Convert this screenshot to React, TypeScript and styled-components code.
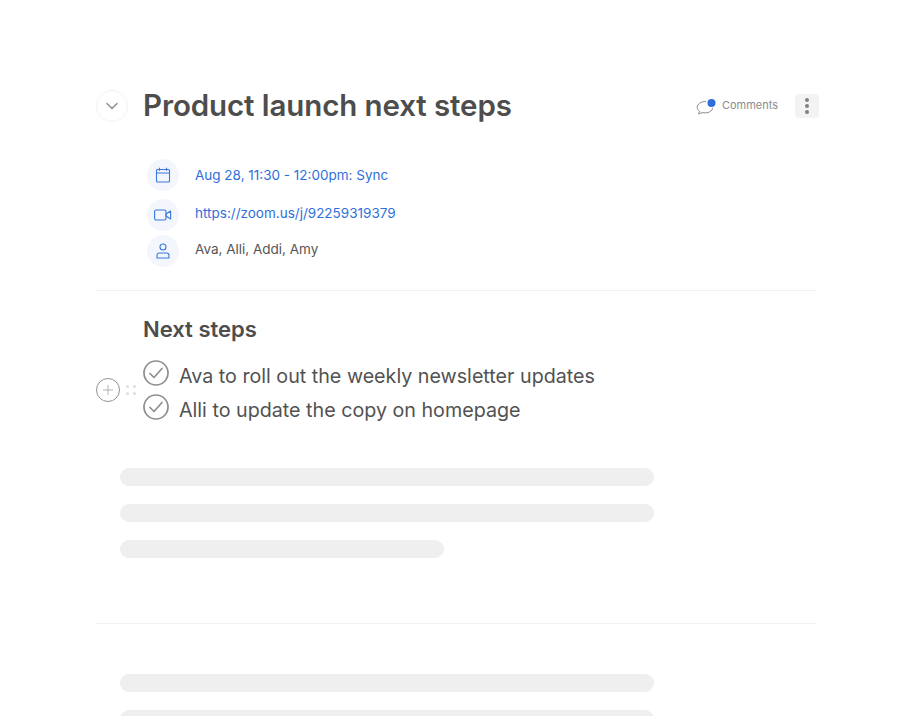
import React from 'react'
import styled, { createGlobalStyle } from 'styled-components';
import { ChevronDown, Plus } from 'lucide-react';

const GlobalStyle = createGlobalStyle`
  html, body {
    margin: 0;
    padding: 0;
    background: #ffffff;
    height: 716px;
    overflow: hidden;
  }
  body {
    font-family: "Inter", "Liberation Sans", sans-serif;
  }
`;

const Page = styled.div`
  box-sizing: border-box;
  width: 914px;
  height: 716px;
  overflow: hidden;
  padding: 90px 96px 0 96px;
`;

const Header = styled.header`
  display: flex;
  align-items: center;
  height: 32px;
  width: 723px;
`;

const CollapseButton = styled.div`
  box-sizing: border-box;
  width: 32px;
  height: 32px;
  border-radius: 50%;
  border: 1px solid #f3f3f3;
  display: flex;
  align-items: center;
  justify-content: center;
  color: #8a8a8a;
  margin-right: 15px;
`;

const Title = styled.h1`
  flex: 1;
  margin: -2px 0 0 0;
  font-size: 29.5px;
  line-height: 32px;
  font-weight: 600;
  letter-spacing: -0.1px;
  color: #4d4d4d;
`;

const CommentsLink = styled.div`
  display: flex;
  align-items: center;
  gap: 6px;
  font-size: 11px;
  color: #8c8c8c;
  margin: -2px 17px 0 0;
`;

const CommentSvg = styled.svg`
  margin-top: 6px;
`;

const MoreButton = styled.div`
  width: 24px;
  height: 24px;
  border-radius: 4px;
  background: #f3f3f3;
  display: flex;
  flex-direction: column;
  align-items: center;
  justify-content: center;
  gap: 2px;
`;

const MoreDot = styled.span`
  width: 4px;
  height: 4px;
  border-radius: 50%;
  background: #808080;
`;

const MetaList = styled.div`
  display: flex;
  flex-direction: column;
  margin: 37px 0 0 51px;
  padding-bottom: 23px;
`;

const MetaRow = styled.div<{ $mb: number }>`
  display: flex;
  align-items: center;
  gap: 16px;
  height: 32px;
  margin-bottom: ${p => p.$mb}px;
`;

const MetaIcon = styled.div`
  width: 32px;
  height: 32px;
  border-radius: 50%;
  background: #f3f6fc;
  display: flex;
  align-items: center;
  justify-content: center;
`;

const MetaText = styled.span<{ $link?: boolean; $up?: boolean }>`
  font-size: 13.5px;
  color: ${p => (p.$link ? '#2f6fdb' : '#555555')};
  margin-top: ${p => (p.$up ? -4 : 0)}px;
`;

const Divider = styled.hr`
  width: 720px;
  height: 1px;
  border: 0;
  margin: 0;
  background: #f1f1f1;
`;

const NotesHeading = styled.h2`
  margin: 25px 0 0 47px;
  font-size: 22px;
  line-height: 26px;
  font-weight: 600;
  color: #4d4d4d;
`;

const TaskBlock = styled.div`
  display: flex;
  align-items: center;
  margin-top: 18px;
`;

const Gutter = styled.div`
  display: flex;
  align-items: center;
  gap: 6px;
  width: 47px;
  flex: none;
`;

const AddButton = styled.div`
  box-sizing: border-box;
  width: 24px;
  height: 24px;
  border-radius: 50%;
  border: 1px solid #919191;
  display: flex;
  align-items: center;
  justify-content: center;
  color: #919191;
`;

const GripDots = styled.div`
  display: grid;
  grid-template-columns: 3px 3px;
  gap: 4px;
`;

const GripDot = styled.span`
  width: 3px;
  height: 3px;
  border-radius: 50%;
  background: #dddddd;
`;

const TaskList = styled.div`
  display: flex;
  flex-direction: column;
  gap: 8px;
`;

const TaskRow = styled.div`
  display: flex;
  align-items: center;
  gap: 10px;
  height: 26px;
`;

const TaskText = styled.span`
  font-size: 19.7px;
  color: #525252;
  margin-top: 5px;
`;

const SkeletonGroup = styled.div<{ $mt: number; $pb?: number }>`
  display: flex;
  flex-direction: column;
  gap: 18px;
  margin: ${p => p.$mt}px 0 0 23.5px;
  padding-bottom: ${p => p.$pb ?? 0}px;
`;

const SkeletonBar = styled.div<{ $short?: boolean }>`
  height: 18px;
  width: ${p => (p.$short ? 324.5 : 534.5)}px;
  border-radius: 9px;
  background: #efefef;
`;

function CheckCircle() {
  return (
    <svg width="26" height="26" viewBox="0 0 26 26" fill="none">
      <circle cx="13" cy="13" r="12" stroke="#8e8e8e" strokeWidth="1.7" />
      <path d="M7 13.5l4 4 8-9" stroke="#8e8e8e" strokeWidth="1.7" strokeLinecap="round" strokeLinejoin="round" />
    </svg>
  );
}

function CalendarIcon() {
  return (
    <svg width="16" height="16" viewBox="0 0 16 16" fill="none" stroke="#3b78de" strokeWidth="1.1">
      <rect x="1.5" y="2.5" width="13" height="12.5" rx="1" />
      <path d="M1.5 6h13M4.5 0.8v3M11.5 0.8v3" />
    </svg>
  );
}

function VideoIcon() {
  return (
    <svg width="18" height="12" viewBox="0 0 18 12" fill="none" stroke="#3b78de" strokeWidth="1.1">
      <rect x="0.6" y="1" width="11.4" height="10" rx="1.6" />
      <path d="M12 5l4.6-3v8L12 7z" strokeLinejoin="round" />
    </svg>
  );
}

function PersonIcon() {
  return (
    <svg width="14" height="16" viewBox="0 0 14 16" fill="none" stroke="#3b78de" strokeWidth="1.1">
      <circle cx="7" cy="4" r="3" />
      <path d="M1 15v-2.6A2.4 2.4 0 0 1 3.4 10h7.2A2.4 2.4 0 0 1 13 12.4V15z" strokeLinejoin="round" />
    </svg>
  );
}

function CommentIcon() {
  return (
    <CommentSvg width="20" height="18" viewBox="0 0 20 18" fill="none">
      <path d="M10 2.5C5 2.5 1.2 5 1.2 8.3c0 1.6.9 3 2.3 3.9L2.6 15l3.6-1.4c.9.2 1.8.3 2.8.3 4.4 0 7.4-2.2 7.6-5" stroke="#8a8a8a" strokeWidth="1" strokeLinejoin="round" />
      <circle cx="15.5" cy="4" r="4" fill="#2f6fdb" />
    </CommentSvg>
  );
}

function App() {
  return (
    <Page>
      <GlobalStyle />
      <Header>
        <CollapseButton>
          <ChevronDown size={20} strokeWidth={1.6} />
        </CollapseButton>
        <Title>Product launch next steps</Title>
        <CommentsLink>
          <CommentIcon />
          Comments
        </CommentsLink>
        <MoreButton>
          <MoreDot />
          <MoreDot />
          <MoreDot />
        </MoreButton>
      </Header>

      <MetaList>
        <MetaRow $mb={8}>
          <MetaIcon><CalendarIcon /></MetaIcon>
          <MetaText $link>Aug 28, 11:30 - 12:00pm: Sync</MetaText>
        </MetaRow>
        <MetaRow $mb={4}>
          <MetaIcon><VideoIcon /></MetaIcon>
          <MetaText $link $up>https://zoom.us/j/92259319379</MetaText>
        </MetaRow>
        <MetaRow $mb={0}>
          <MetaIcon><PersonIcon /></MetaIcon>
          <MetaText $up>Ava, Alli, Addi, Amy</MetaText>
        </MetaRow>
      </MetaList>

      <Divider />

      <NotesHeading>Next steps</NotesHeading>
      <TaskBlock>
        <Gutter>
          <AddButton>
            <Plus size={16} strokeWidth={1} />
          </AddButton>
          <GripDots>
            <GripDot />
            <GripDot />
            <GripDot />
            <GripDot />
          </GripDots>
        </Gutter>
        <TaskList>
          <TaskRow>
            <CheckCircle />
            <TaskText>Ava to roll out the weekly newsletter updates</TaskText>
          </TaskRow>
          <TaskRow>
            <CheckCircle />
            <TaskText>Alli to update the copy on homepage</TaskText>
          </TaskRow>
        </TaskList>
      </TaskBlock>

      <SkeletonGroup $mt={48} $pb={65}>
        <SkeletonBar />
        <SkeletonBar />
        <SkeletonBar $short />
      </SkeletonGroup>

      <Divider />

      <SkeletonGroup $mt={50}>
        <SkeletonBar />
        <SkeletonBar />
      </SkeletonGroup>
    </Page>
  );
}

export default App;
